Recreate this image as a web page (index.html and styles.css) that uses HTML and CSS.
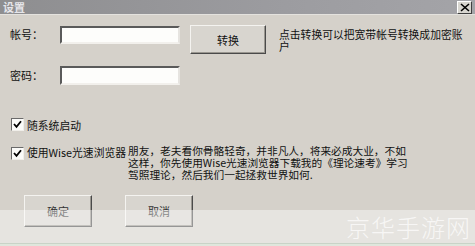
FILE: index.html
```html
<!DOCTYPE html>
<html lang="zh">
<head>
<meta charset="utf-8">
<link rel="stylesheet" href="styles.css">
</head>
<body>
<div class="window">
  <div class="titlebar">
    <span class="title">设置</span>
    <span class="close">
      <svg width="10" height="9" viewBox="0 0 10 9"><path d="M1 1 L9 8 M9 1 L1 8" stroke="#000" stroke-width="1.6"/></svg>
    </span>
  </div>
  <div class="body">
    <div class="row row-account">
      <span class="label">帐号：</span>
      <span class="input"></span>
      <span class="btn btn-convert">转换</span>
      <span class="hint">点击转换可以把宽带帐号转换成加密账户</span>
    </div>
    <div class="row row-password">
      <span class="label">密码：</span>
      <span class="input input-pw"></span>
    </div>
    <div class="row check-row check-first">
      <span class="checkbox"><svg width="9" height="9" viewBox="0 0 9 9"><path d="M1 4 L3.5 6.8 L8 1.2" fill="none" stroke="#000" stroke-width="1.8"/></svg></span>
      <span class="check-label">随系统启动</span>
    </div>
    <div class="row check-row check-second">
      <span class="checkbox"><svg width="9" height="9" viewBox="0 0 9 9"><path d="M1 4 L3.5 6.8 L8 1.2" fill="none" stroke="#000" stroke-width="1.8"/></svg></span>
      <span class="check-label">使用Wise光速浏览器</span>
      <p class="para">朋友，老夫看你骨骼轻奇，并非凡人，将来必成大业，不如这样，你先使用Wise光速浏览器下载我的《理论速考》学习驾照理论，然后我们一起拯救世界如何.</p>
    </div>
    <div class="row actions">
      <span class="btn btn-action">确定</span>
      <span class="btn btn-action">取消</span>
    </div>
  </div>
  <div class="watermark">
    <span class="wm-text">京华手游网</span>
  </div>
  <div class="bottom-strip"></div>
</div>
</body>
</html>
```
FILE: styles.css
```css
* { box-sizing: border-box; }
html, body { margin: 0; padding: 0; }
body {
  width: 475px;
  height: 246px;
  overflow: hidden;
  font-family: "Noto Sans CJK SC", "Liberation Sans", sans-serif;
  font-size: 10.7px;
  color: #111;
}
.window {
  position: relative;
  width: 475px;
  height: 246px;
  background: #d5d1ca;
  display: flex;
  flex-direction: column;
}
.titlebar {
  height: 15px;
  background: linear-gradient(to right, #8e8e90, #9c9ca0 60%, #a4a4a8);
  display: flex;
  align-items: center;
  justify-content: space-between;
  padding: 0 3px 0 3px;
  border-bottom: 1px solid #e4e2de;
}
.title {
  color: #e6e6ea;
  font-size: 11px;
  line-height: 13px;
  font-weight: bold;
}
.close {
  width: 15px;
  height: 13px;
  background: #d8d6d0;
  border: 1px solid;
  border-color: #fff #404040 #404040 #fff;
  display: flex;
  align-items: center;
  justify-content: center;
}
.body {
  padding: 10px 0 0 10px;
  display: flex;
  flex-direction: column;
}
.row { display: flex; align-items: flex-start; }
.label {
  width: 50px;
  margin-top: 3px;
  line-height: 13px;
  font-size: 11px;
}
.input {
  width: 120px;
  height: 18px;
  margin-top: 1px;
  background: #fdfdfb;
  border: 2px solid;
  border-color: #5a5a5a #e6e4e0 #f2f0ec #5a5a5a;
}
.input-pw { height: 19px; margin-top: 0; }
.btn {
  display: flex;
  align-items: center;
  justify-content: center;
  background: #d8d5cf;
  border: 1px solid;
  border-color: #f4f3f0 #4a4a4a #4a4a4a #f4f3f0;
  box-shadow: inset -1px -1px 0 #9a9790;
  font-size: 11px;
}
.btn-convert {
  width: 76px;
  height: 29px;
  margin-left: 10px;
}
.hint {
  width: 190px;
  margin-left: 13px;
  margin-top: 3px;
  line-height: 12px;
  font-size: 10.8px;
}
.row-password { margin-top: 12px; }
.check-row { line-height: 12px; }
.checkbox {
  width: 13px;
  height: 13px;
  margin-left: 1px;
  background: #fbfbf9;
  border: 1px solid;
  border-color: #6a6a6a #f0eee9 #f0eee9 #6a6a6a;
  display: flex;
  align-items: center;
  justify-content: center;
  flex-shrink: 0;
}
.check-label {
  margin-left: 3px;
  font-size: 10.8px;
}
.check-first { margin-top: 33px; }
.check-first .check-label { margin-top: 1px; }
.check-second { margin-top: 14px; }
.check-second .checkbox { margin-top: 2px; }
.check-second .check-label { margin-top: 1px; width: 101px; flex-shrink: 0; }
.para {
  margin: 0;
  width: 284px;
  line-height: 12px;
  font-size: 10.7px;
}
.actions {
  margin-top: 14px;
  padding-left: 14px;
  gap: 33px;
}
.btn-action {
  width: 68px;
  height: 32px;
  color: #333;
}
.watermark {
  position: absolute;
  left: 0;
  top: 210px;
  width: 475px;
  height: 33px;
  background: rgba(255, 255, 255, 0.42);
  display: flex;
  justify-content: flex-end;
  align-items: center;
}
.wm-text {
  font-size: 24px;
  line-height: 28px;
  color: rgba(255, 255, 255, 0.7);
  letter-spacing: 1px;
  margin-right: 4px;
  font-weight: 300;
}
.bottom-strip {
  position: absolute;
  left: 0;
  bottom: 0;
  width: 475px;
  height: 3px;
  background: #dfe6dc;
  border-top: 1px solid #c9d3c7;
}
```
